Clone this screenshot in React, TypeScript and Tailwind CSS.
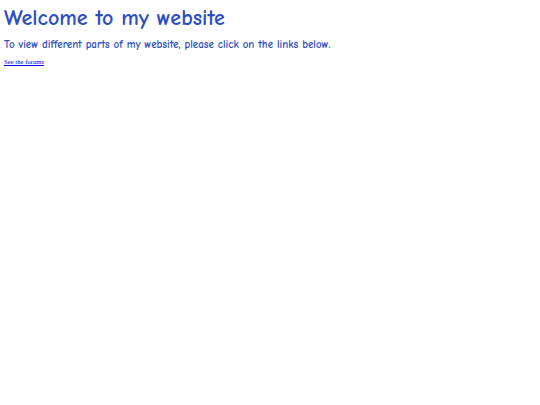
export default function App() {
  return (
    <div className="min-h-[405px] bg-white px-[4px] pt-[3px]">
      <h1 className="text-[22px] leading-[30px] font-bold text-[#2d4fbf] font-['Comic_Sans_MS','Comic_Neue','Open_Sans',sans-serif]">
        Welcome to my website
      </h1>
      <p className="mt-[4px] text-[11px] leading-[16px] font-bold text-[#2d4fbf] font-['Comic_Sans_MS','Comic_Neue','Open_Sans',sans-serif]">
        To view different parts of my website, please click on the links below.
      </p>
      <a
        href="#"
        className="mt-[4px] block w-fit text-[6.7px] leading-[10px] text-[#0000ee] underline font-['Liberation_Serif',serif]"
      >
        See the forums
      </a>
    </div>
  );
}
